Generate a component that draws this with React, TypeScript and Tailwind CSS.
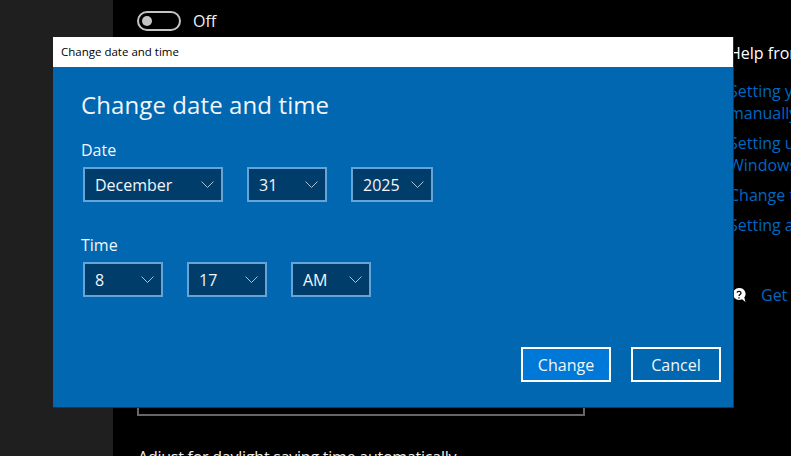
import React from 'react';

function Chevron() {
    return (
        <svg width="13" height="7" viewBox="0 0 13 7" fill="none" stroke="#a9c2d6" strokeWidth="1" className="shrink-0">
            <path d="M0.5 0.5l6 6 6-6" />
        </svg>
    );
}

function Select({ value, width }: { value: string; width: string }) {
    return (
        <div className={`${width} h-[35px] flex items-center justify-between pl-[10px] pr-[7px] bg-[#003d6b] border-2 border-[#66a3d6] text-[16px] text-[#f2f6fa]`}>
            <span>{value}</span>
            <Chevron />
        </div>
    );
}

function HelpLink({ children }: { children: React.ReactNode }) {
    return <div className="text-[#0067c0] text-[16px] leading-[22px] mb-[8px]">{children}</div>;
}

export default function App(): React.ReactElement {
    return (
        <div className="relative w-[791px] h-[456px] overflow-hidden bg-black text-white flex font-['Open_Sans','Noto_Sans',sans-serif]">
            {/* settings page behind the dialog */}
            <div className="w-[113px] shrink-0 bg-[#1f1f1f]" />
            <div className="w-[616px] shrink-0 pl-[24px] pt-[10px]">
                <div className="flex items-center gap-[12px] h-[21px]">
                    <div className="w-[44px] h-[20px] rounded-full border-2 border-[#c4c4c4] flex items-center pl-[3px]">
                        <div className="w-[10px] h-[10px] rounded-full bg-[#c4c4c4]" />
                    </div>
                    <span className="text-[16px] text-[#f0f0f0]">Off</span>
                </div>
                <div className="mt-[352px] w-[448px] h-[33px] border-2 border-[#666666]" />
                <div className="mt-[30px] ml-[1px] text-[16px] leading-[22px] tracking-[-0.24px] whitespace-nowrap text-[#f0f0f0]">Adjust for daylight saving time automatically</div>
            </div>
            <div className="flex-1 min-w-0 pt-[42px] whitespace-nowrap">
                <div className="text-[16px] leading-[22px] mb-[16px]">Help from the web</div>
                <HelpLink>Setting your time zone<br />manually</HelpLink>
                <HelpLink>Setting up<br />Windows</HelpLink>
                <HelpLink>Change the time</HelpLink>
                <HelpLink>Setting a clock</HelpLink>
                <div className="flex items-center gap-[15px] mt-[47px] ml-[3px]">
                    <svg width="14" height="16" viewBox="0 0 14 16" className="shrink-0">
                        <path d="M7 1a6 6 0 1 0 3 11.2L13.5 15l-1.2-4.4A6 6 0 0 0 7 1z" fill="white" />
                        <path d="M5 5.5C5.4 3.8 9 3.8 9 6c0 1.5-2 1.5-2 3M7 10.2v1.2" fill="none" stroke="black" strokeWidth="1.3" />
                    </svg>
                    <span className="text-[#0067c0] text-[16px]">Get help</span>
                </div>
            </div>

            {/* modal dialog */}
            <div className="absolute left-[53px] top-[37px] w-[681px] h-[371px] flex flex-col bg-[#0067b0] border-r border-b border-[#1d3347]">
                <div className="h-[30px] shrink-0 bg-white text-black text-[11.5px] flex items-center pl-[8px]">Change date and time</div>
                <div className="flex-1 flex flex-col pl-[28px] pr-[12px]">
                    <div className="mt-[20px] text-[24px] leading-[36px] tracking-[0.1px] text-[#f2f6fa]">Change date and time</div>
                    <div className="mt-[16px] text-[16px] leading-[22px] text-[#f2f6fa]">Date</div>
                    <div className="mt-[6px] ml-[2px] flex gap-[24px]">
                        <Select value="December" width="w-[140px]" />
                        <Select value="31" width="w-[80px]" />
                        <Select value="2025" width="w-[82px]" />
                    </div>
                    <div className="mt-[32px] text-[16px] leading-[22px] text-[#f2f6fa]">Time</div>
                    <div className="mt-[6px] ml-[2px] flex gap-[24px]">
                        <Select value="8" width="w-[80px]" />
                        <Select value="17" width="w-[80px]" />
                        <Select value="AM" width="w-[80px]" />
                    </div>
                    <div className="mt-[50px] flex justify-end gap-[20px]">
                        <button className="w-[90px] h-[35px] bg-[#0078d7] border-2 border-white text-[16px] text-[#f2f6fa]">Change</button>
                        <button className="w-[90px] h-[35px] border-2 border-white text-[16px] text-[#f2f6fa]">Cancel</button>
                    </div>
                </div>
            </div>
        </div>
    );
}
